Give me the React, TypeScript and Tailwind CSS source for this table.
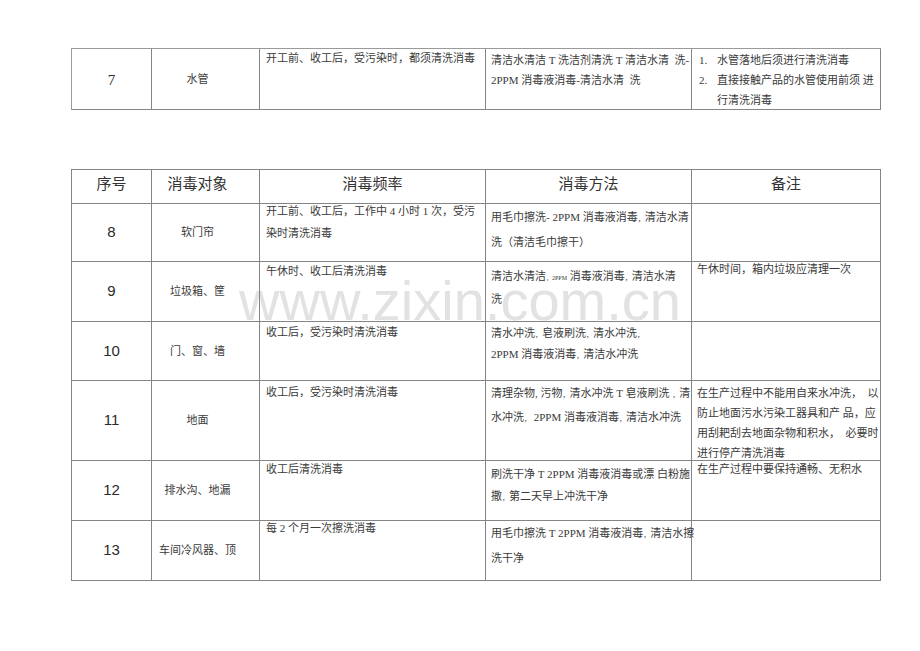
import type { ReactNode } from 'react';

const cjk = "font-['Liberation_Serif','Noto_Sans_CJK_SC',serif]";
const num = "font-['Liberation_Sans_Narrow','Liberation_Sans',sans-serif]";

// tiny comma that the source document shrank
const C = () => <span className="text-[7px]">，</span>;

type Block = { cls: string; lines: ReactNode[] };

type Row = {
    no: string;
    obj: string;
    freq: Block;
    method: Block;
    note?: Block;
};

const rows: Row[] = [
    {
        no: '8',
        obj: '软门帘',
        freq: { cls: 'pt-[0px] gap-[8px]', lines: ['开工前、收工后，工作中 4 小时 1 次，受污', '染时清洗消毒'] },
        method: { cls: 'pt-[6px] gap-[9px]', lines: [<>用毛巾擦洗- 2PPM 消毒液消毒<C />清洁水清</>, '洗（清洁毛巾擦干）'] },
    },
    {
        no: '9',
        obj: '垃圾箱、筐',
        freq: { cls: 'pt-[2px] gap-[8px]', lines: ['午休时、收工后清洗消毒'] },
        method: { cls: 'pt-[7px] gap-[7px]', lines: [<>清洁水清洁<span className="text-[6px]">，2PPM</span> 消毒液消毒<C />清洁水清</>, '洗'] },
        note: { cls: 'pt-[0px] gap-[6px]', lines: ['午休时间，箱内垃圾应清理一次'] },
    },
    {
        no: '10',
        obj: '门、窗、墙',
        freq: { cls: 'pt-[3px] gap-[8px]', lines: ['收工后，受污染时清洗消毒'] },
        method: { cls: 'pt-[4px] gap-[5px]', lines: [<>清水冲洗<C />皂液刷洗<C />清水冲洗<C /></>, <>2PPM 消毒液消毒<C />清洁水冲洗</>] },
    },
    {
        no: '11',
        obj: '地面',
        freq: { cls: 'pt-[4px] gap-[8px]', lines: ['收工后，受污染时清洗消毒'] },
        method: { cls: 'pt-[5px] gap-[8px]', lines: [<>清理杂物, 污物<C />清水冲洗 T 皂液刷洗 <C />清</>, <>水冲洗<C /> 2PPM 消毒液消毒<C />清洁水冲洗</>] },
        note: {
            cls: 'pt-[5px] gap-[6px]',
            lines: ['在生产过程中不能用自来水冲洗，  以', '防止地面污水污染工器具和产 品，应', '用刮耙刮去地面杂物和积水，  必要时', '进行停产清洗消毒'],
        },
    },
    {
        no: '12',
        obj: '排水沟、地漏',
        freq: { cls: 'pt-[1px] gap-[8px]', lines: ['收工后清洗消毒'] },
        method: { cls: 'pt-[6px] gap-[8px]', lines: ['刷洗干净 T 2PPM 消毒液消毒或漂 白粉施', <>撒<C />第二天早上冲洗干净</>] },
        note: { cls: 'pt-[1px] gap-[6px]', lines: ['在生产过程中要保持通畅、无积水'] },
    },
    {
        no: '13',
        obj: '车间冷风器、顶',
        freq: { cls: 'pt-[0px] gap-[8px]', lines: ['每 2 个月一次擦洗消毒'] },
        method: { cls: 'pt-[5px] gap-[9px]', lines: [<>用毛巾擦洗 T 2PPM 消毒液消毒<C />清洁水擦</>, '洗干净'] },
    },
];

function Lines({ block, pad }: { block?: Block; pad: string }) {
    return (
        <div className={`border-r border-b border-[#858585] ${pad}`}>
            {block && (
                <div className={`flex flex-col ${block.cls}`}>
                    {block.lines.map((l, i) => (
                        <div key={i} className="leading-[14px] whitespace-pre text-[11px] text-[#3a3a3a]">{l}</div>
                    ))}
                </div>
            )}
        </div>
    );
}

function NoCell({ n }: { n: string }) {
    return (
        <div className={`border-r border-b border-[#858585] flex items-center justify-center ${num} text-[15px] text-[#2a2a2a]`}>
            {n}
        </div>
    );
}

function ObjCell({ t }: { t: string }) {
    return (
        <div className="border-r border-b border-[#858585] flex items-center justify-center pr-[16px] text-[11px] text-[#3a3a3a]">
            {t}
        </div>
    );
}

export default function App() {
    const headers = ['序号', '消毒对象', '消毒频率', '消毒方法', '备注'];

    return (
        <div className={`relative w-[920px] h-[651px] bg-white overflow-hidden ${cjk}`}>
            {/* watermark */}
            <div className="absolute left-[239px] top-[273px] text-[56px] leading-none font-['Liberation_Sans',sans-serif] text-[#e2e2e2] pointer-events-none select-none">
                www.zixin.com.cn
            </div>

            <div className="relative pt-[48px] pl-[71px]">
                {/* carried-over row 7 */}
                <div className="grid grid-cols-[80px_108px_226px_206px_189px] grid-rows-[61px] w-[810px] border-l border-t border-[#9a9a9a]">
                    <div className="border-r border-b border-[#858585] flex items-center justify-center pt-[2px] text-[15px] text-[#2a2a2a] font-['Liberation_Serif',serif]">
                        7
                    </div>
                    <ObjCell t="水管" />
                    <Lines pad="pl-[6px]" block={{ cls: 'pt-[2px]', lines: ['开工前、收工后，受污染时，都须清洗消毒'] }} />
                    <Lines pad="pl-[5px]" block={{ cls: 'pt-[4px] gap-[6px]', lines: ['清洁水清洁 T 洗洁剂清洗 T 清洁水清  洗-', '2PPM 消毒液消毒-清洁水清  洗'] }} />
                    <div className="border-r border-b border-[#858585] pl-[7px] pt-[4px] text-[11px] text-[#3a3a3a]">
                        <div className="flex leading-[14px]">
                            <span className="w-[18px] shrink-0">1.</span>
                            <span>水管落地后须进行清洗消毒</span>
                        </div>
                        <div className="flex leading-[20px] mt-[3px]">
                            <span className="w-[18px] shrink-0">2.</span>
                            <span className="whitespace-pre">直接接触产品的水管使用前须 进{'\n'}行清洗消毒</span>
                        </div>
                    </div>
                </div>

                {/* main table */}
                <div className="mt-[59px] grid grid-cols-[80px_108px_226px_206px_189px] grid-rows-[34px_58px_60px_59px_80px_60px_60px] w-[810px] border-l border-t border-[#858585]">
                    {headers.map((h) => (
                        <div
                            key={h}
                            className={`border-r border-b border-[#858585] flex items-center justify-center pb-[5px] text-[15px] text-[#333] ${h === '消毒对象' ? 'pr-[16px]' : ''}`}
                        >
                            {h}
                        </div>
                    ))}
                    {rows.map((r) => (
                        <div key={r.no} className="contents">
                            <NoCell n={r.no} />
                            <ObjCell t={r.obj} />
                            <Lines pad="pl-[6px]" block={r.freq} />
                            <Lines pad="pl-[5px]" block={r.method} />
                            <Lines pad="pl-[5px]" block={r.note} />
                        </div>
                    ))}
                </div>
            </div>
        </div>
    );
}
